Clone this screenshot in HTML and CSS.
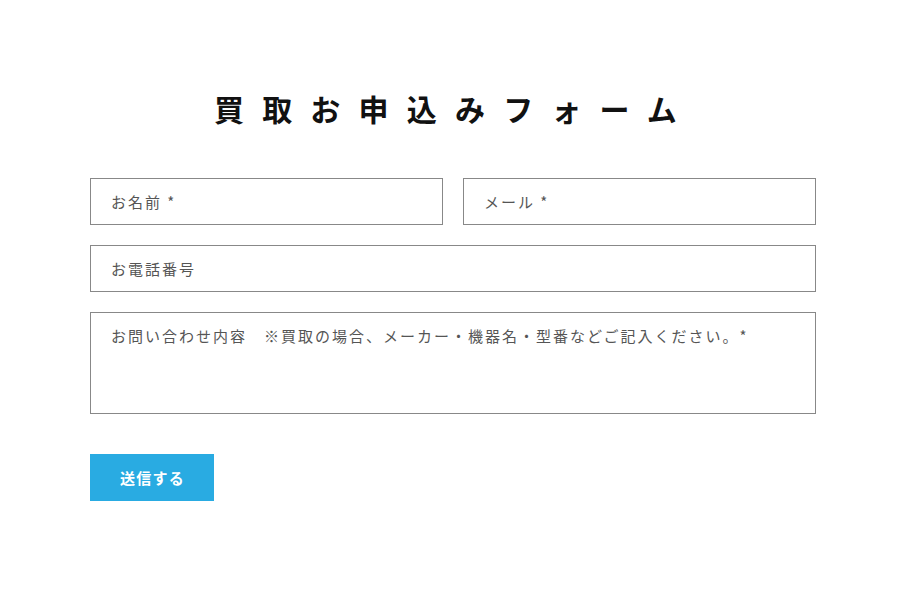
FILE: index.html
```html
<!DOCTYPE html>
<html lang="ja">
<head>
  <meta charset="UTF-8" />
  <meta name="viewport" content="width=device-width, initial-scale=1.0"/>
  <title>買取お申込みフォーム</title>
  <link rel="stylesheet" href="styles.css">
</head>
<body>
  <div class="container">
    <h2 class="form-title">買取お申込みフォーム</h2>

    <form class="contact-form">
      <!-- 名前とメール -->
      <div class="form-row">
        <input type="text" class="field" placeholder="お名前 *">
        <input type="email" class="field" placeholder="メール *">
      </div>
      <div class="form-row">
        <input type="tel" class="field" placeholder="お電話番号">
      </div>
      <div class="form-row">
        <textarea class="field field-area" placeholder="お問い合わせ内容　※買取の場合、メーカー・機器名・型番などご記入ください。*"></textarea>
      </div>
      <button type="submit" class="submit-btn">送信する</button>
    </form>
  </div>
</body>
</html>
```

FILE: styles.css
```css
:root {
  --text: #111;
  --placeholder: #555;
  --border: #888;
  --accent: #29abe2;
  --white: #fff;
}

body {
  margin: 0;
  padding: 0;
  background-color: var(--white);
  color: var(--text);
  font-family: 'Noto Sans CJK JP', 'Noto Sans', sans-serif;
}

.container {
  width: 726px;
  margin: 0 0 0 90px;
  padding-top: 86px;
}

.form-title {
  margin: 0 0 48px;
  text-align: center;
  font-size: 30px;
  line-height: 44px;
  font-weight: 700;
  letter-spacing: 18.2px;
  padding-left: 3px;
}

.contact-form {
  display: flex;
  flex-direction: column;
}

.form-row {
  display: flex;
  gap: 20px;
  margin-bottom: 20px;
}

.field {
  flex: 1;
  min-width: 0;
  height: 47px;
  box-sizing: border-box;
  border: 1px solid var(--border);
  border-radius: 0;
  padding: 0 20px;
  font-family: inherit;
  font-size: 15px;
  letter-spacing: 2px;
  color: var(--text);
  background: var(--white);
  outline: none;
}

.field::placeholder {
  color: var(--placeholder);
}

.field-area {
  height: 102px;
  padding: 11px 20px;
  line-height: 24px;
  resize: none;
}

.submit-btn {
  align-self: flex-start;
  margin-top: 20px;
  width: 124px;
  height: 47px;
  border: none;
  border-radius: 0;
  background-color: var(--accent);
  color: var(--white);
  font-family: inherit;
  font-size: 15px;
  font-weight: 700;
  letter-spacing: 1.2px;
  padding-left: 7px;
  cursor: pointer;
}
```
